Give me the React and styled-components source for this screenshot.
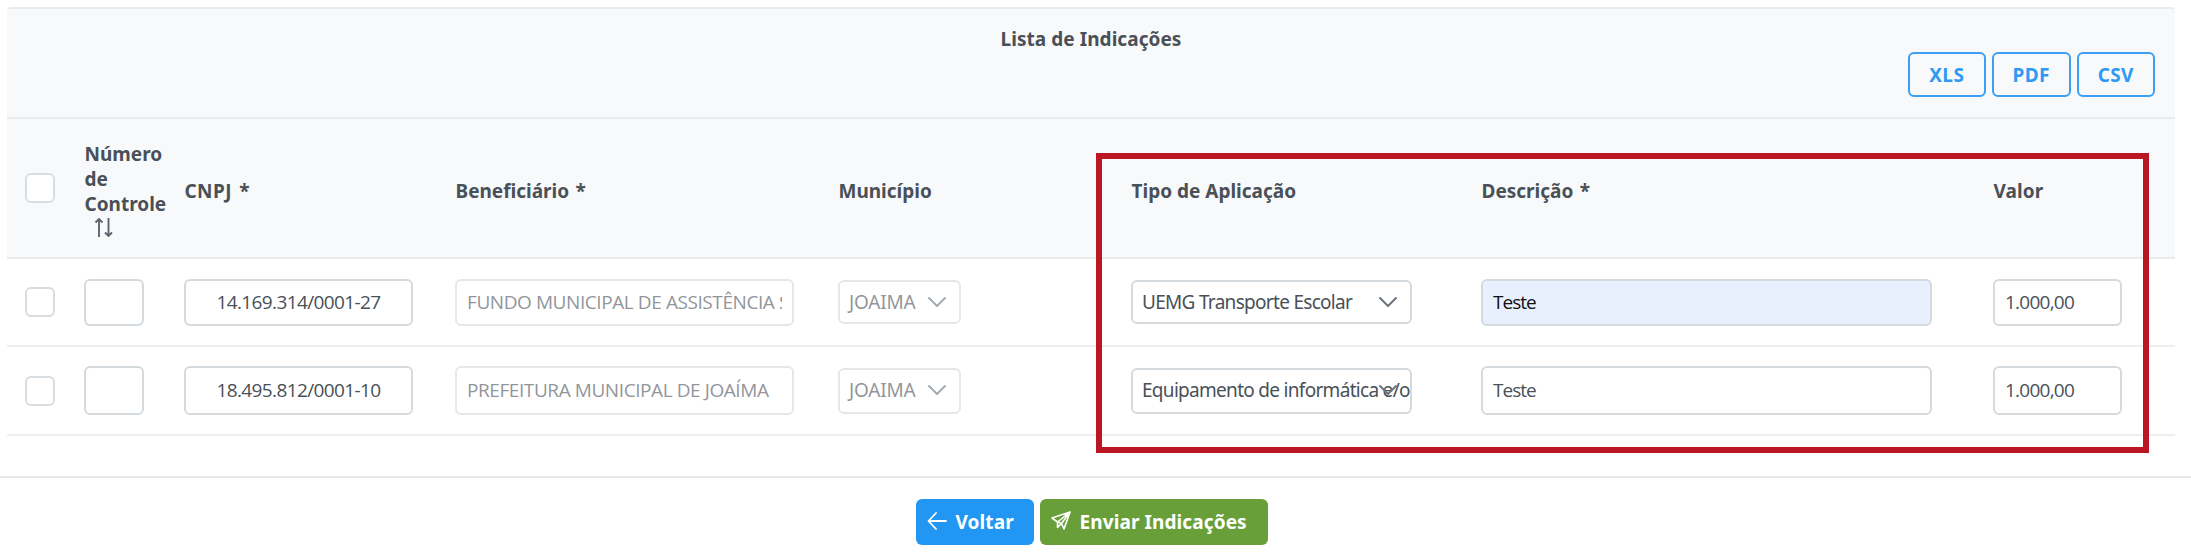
import React from "react";
import styled, { createGlobalStyle } from "styled-components";

const Global = createGlobalStyle`
  * { box-sizing: border-box; }
  body { margin: 0; background: #fff; color: #495057; font-family: "Noto Sans", sans-serif; font-size: 19px; }
`;

const Page = styled.main`
  position: relative;
  width: 2191px;
  height: 558px;
  padding-top: 7px;
  overflow: hidden;
`;

const Table = styled.section`
  width: 2168px;
  margin-left: 7px;
`;

const Caption = styled.header`
  height: 112px;
  padding: 17px 20px 0;
  border-top: 2px solid #e9ecef;
  border-bottom: 2px solid #e9ecef;
  border-radius: 4px 4px 0 0;
  background: #f8f9fa;
`;

const Title = styled.h1`
  margin: 0;
  font-size: 19px;
  line-height: 26px;
  font-weight: 700;
  text-align: center;
  letter-spacing: 0.05px;
`;

const Exports = styled.div`
  display: flex;
  justify-content: flex-end;
  gap: 6px;
`;

const ExportButton = styled.button`
  width: 78.5px;
  height: 45px;
  padding: 0;
  border: 2px solid #3b9ff3;
  border-radius: 6px;
  background: transparent;
  color: #2f9af3;
  font: 700 19px "Noto Sans", sans-serif;
  letter-spacing: 0.4px;
`;

const columns = "59px 100px 271px 383px 293px 350px 512px 1fr";

const HeadRow = styled.div`
  display: grid;
  grid-template-columns: ${columns};
  align-items: center;
  height: 140px;
  padding: 0 0 0 18px;
  border-bottom: 2px solid #e9ecef;
  background: #f8f9fa;
`;

const Row = styled.div`
  display: grid;
  grid-template-columns: ${columns};
  align-items: center;
  height: ${(p) => (p.$tall ? 89 : 88)}px;
  padding-left: 18px;
  border-bottom: 2px solid #eceef0;
`;

const Heading = styled.div`
  padding: 7px 0 0 0.5px;
  font-weight: 700;
  line-height: 25px;
  letter-spacing: ${(p) => p.$track || 0}px;
  word-spacing: ${(p) => p.$gap || 0}px;
  white-space: nowrap;
`;

const Check = styled.span`
  width: 30px;
  height: 30px;
  border: 2px solid #d8dde2;
  border-radius: 6px;
  background: #fff;
`;

const Field = styled.input`
  width: ${(p) => p.$w}px;
  height: ${(p) => (p.$tall ? 49 : 47)}px;
  padding: ${(p) => (p.$tall ? "0 10px 1px" : "0 10px")};
  border: 2px solid #d5dadf;
  border-radius: 6px;
  outline: none;
  background: ${(p) => (p.$filled ? "#e8f0fe" : "#fff")};
  color: ${(p) => (p.$filled ? "#111" : "#495057")};
  font: 19px "Open Sans", sans-serif;
  letter-spacing: ${(p) => p.$track || 0}px;
  text-align: ${(p) => (p.$center ? "center" : "left")};
  opacity: ${(p) => (p.$muted ? 0.6 : 1)};
`;

const Select = styled.div`
  display: flex;
  align-items: center;
  position: relative;
  width: ${(p) => p.$w}px;
  height: ${(p) => (p.$tall ? 46 : 44)}px;
  padding: ${(p) => (p.$tall ? "0 0 1px 9px" : "0 0 0 9px")};
  border: 2px solid #d5dadf;
  border-radius: 6px;
  overflow: hidden;
  white-space: nowrap;
  letter-spacing: ${(p) => p.$track || 0}px;
  opacity: ${(p) => (p.$muted ? 0.6 : 1)};
`;

const Caret = styled.svg`
  position: absolute;
  right: 12px;
  top: 13px;
`;

const Highlight = styled.div`
  position: absolute;
  left: 1096px;
  top: 153px;
  width: 1053px;
  height: 300px;
  border: 6.5px solid #bb1623;
`;

const Footer = styled.footer`
  display: flex;
  justify-content: center;
  gap: 6px;
  margin-top: 40px;
  padding: 21px 8px 0 0;
  border-top: 2px solid #e3e8ed;
`;

const Action = styled.button`
  display: flex;
  align-items: center;
  gap: 9px;
  width: ${(p) => p.$w}px;
  height: 46px;
  padding: 0 0 0 11px;
  border: 0;
  border-radius: 6px;
  background: ${(p) => p.$bg};
  color: #fff;
  font: 700 19px "Noto Sans", sans-serif;
  letter-spacing: 0.1px;
  white-space: nowrap;
`;

const ActionIcon = styled.svg`
  margin-bottom: 4px;
`;

const Chevron = () => (
  <Caret width="20" height="14" viewBox="0 0 20 14" fill="none" stroke="#6c757d" strokeWidth="2" strokeLinecap="round" strokeLinejoin="round">
    <path d="M2 3l8 8 8-8" />
  </Caret>
);

const SortIcon = styled.svg`
  display: block;
  margin: 0 0 2px 8px;
`;

const rows = [
  { cnpj: "14.169.314/0001-27", name: "FUNDO MUNICIPAL DE ASSISTÊNCIA SOCIAL", type: "UEMG Transporte Escolar", filled: true },
  { cnpj: "18.495.812/0001-10", name: "PREFEITURA MUNICIPAL DE JOAÍMA", type: "Equipamento de informática e/o", tall: true },
];

export default function App() {
  return (
    <Page>
      <Global />
      <Table>
        <Caption>
          <Title>Lista de Indicações</Title>
          <Exports>
            {["XLS", "PDF", "CSV"].map((t) => <ExportButton key={t}>{t}</ExportButton>)}
          </Exports>
        </Caption>
        <HeadRow>
          <Check />
          <Heading>
            Número<br />de<br />Controle
            <SortIcon width="22" height="22" viewBox="0 0 22 22" fill="none" stroke="#5c656e" strokeWidth="1.900">
              <path d="M6 20V2M2.500 5.500L6 2l3.500 3.500M15.500 1v18M12 15.500l3.500 3.500 3.500-3.500" />
            </SortIcon>
          </Heading>
          <Heading $track={0.4} $gap={2}>CNPJ *</Heading>
          <Heading $gap={1.5}>Beneficiário *</Heading>
          <Heading>Município</Heading>
          <Heading>Tipo de Aplicação</Heading>
          <Heading $gap={1.5}>Descrição *</Heading>
          <Heading $track={0.1}>Valor</Heading>
        </HeadRow>
        {rows.map((r) => (
          <Row key={r.cnpj} $tall={r.tall}>
            <Check />
            <Field readOnly $w={60} $tall={r.tall} />
            <Field readOnly $w={229} $tall={r.tall} $center $track={-0.62} value={r.cnpj} />
            <Field readOnly $w={339} $tall={r.tall} $muted $track={-0.42} value={r.name} />
            <Select $w={123} $tall={r.tall} $muted $track={-0.2}>JOAIMA<Chevron /></Select>
            <Select $w={281} $tall={r.tall} $track={-0.7}>{r.type}<Chevron /></Select>
            <Field readOnly $w={451} $tall={r.tall} $filled={r.filled} $track={-1} value="Teste" />
            <Field readOnly $w={129} $tall={r.tall} $track={-0.75} value="1.000,00" />
          </Row>
        ))}
      </Table>
      <Footer>
        <Action $w={118} $bg="#2196f3">
          <ActionIcon width="20" height="20" viewBox="0 0 20 20" fill="none" stroke="#fff" strokeWidth="1.800" strokeLinecap="round" strokeLinejoin="round">
            <path d="M19 11H1.500M9 3L1.500 11 9 19" />
          </ActionIcon>
          Voltar
        </Action>
        <Action $w={228} $bg="#689f38">
          <ActionIcon width="20" height="20" viewBox="0 0 20 20" fill="none" stroke="#fff" strokeWidth="1.600" strokeLinecap="round" strokeLinejoin="round">
            <path d="M19 2L1 8l5.500 4L19 2l-6 17-2.500-5.500L19 2M6.500 12v5.500l4-4-4-1.500" />
          </ActionIcon>
          Enviar Indicações
        </Action>
      </Footer>
      <Highlight />
    </Page>
  );
}
